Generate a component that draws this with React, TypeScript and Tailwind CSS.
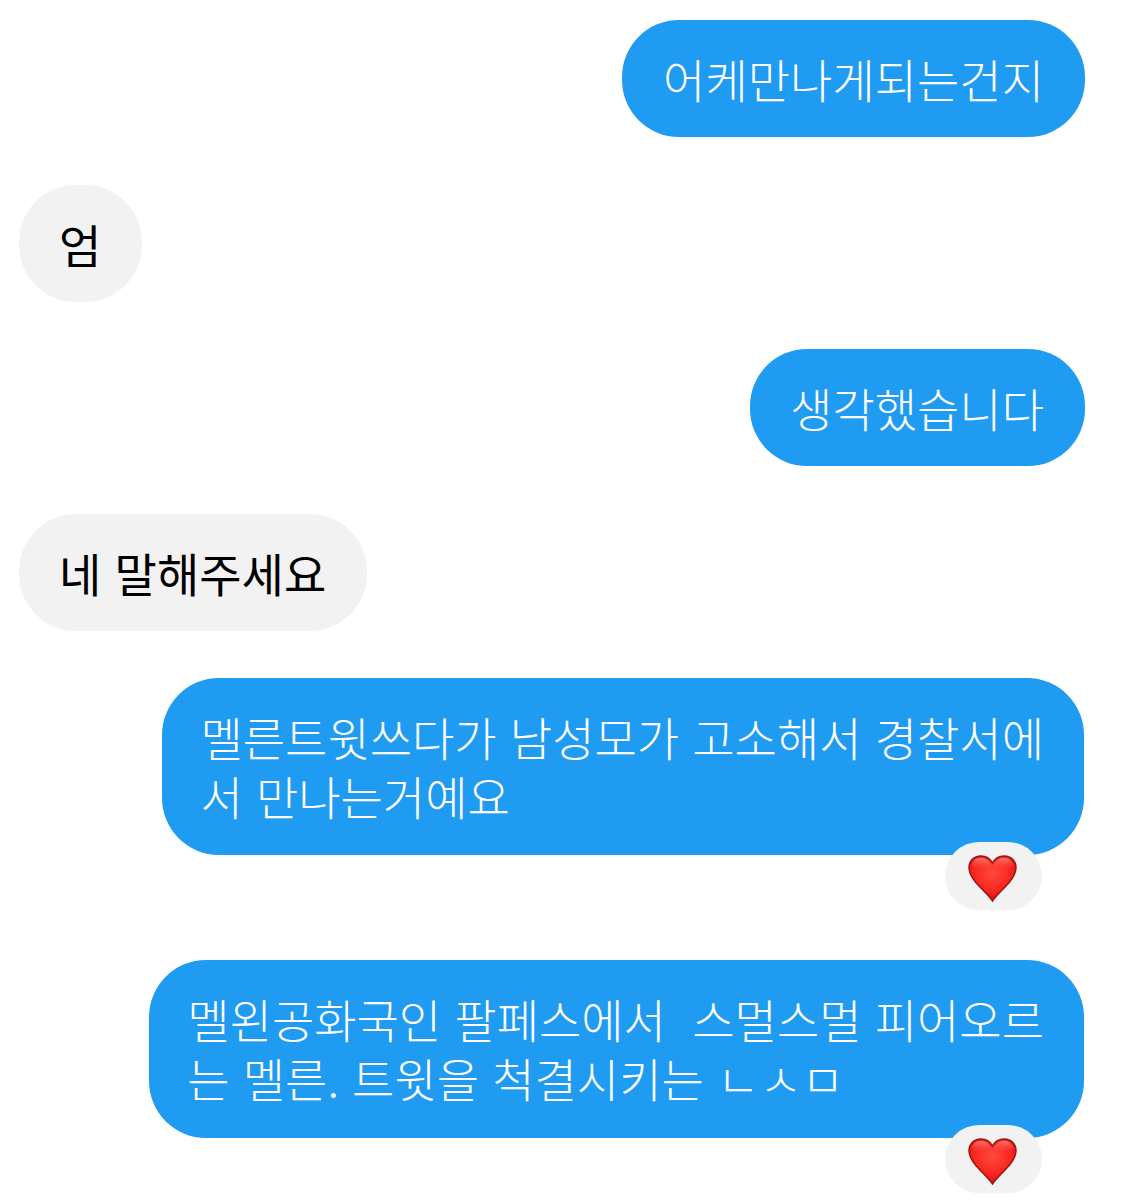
const fontStack = 'font-["Noto_Sans_CJK_KR","Noto_Sans",sans-serif]';

function Heart() {
  return (
    <svg viewBox="0 0 50 48" className="w-[49px] h-[47px] translate-y-[2px] -translate-x-[1px]">
      <defs>
        <radialGradient id="heartFill" cx="50%" cy="38%" r="68%">
          <stop offset="0%" stopColor="#ff4a3c" />
          <stop offset="60%" stopColor="#f8251e" />
          <stop offset="100%" stopColor="#c40d0a" />
        </radialGradient>
        <linearGradient id="heartShine" x1="0" y1="0" x2="0" y2="1">
          <stop offset="0%" stopColor="#ff9a90" stopOpacity="0.75" />
          <stop offset="100%" stopColor="#ff5a50" stopOpacity="0" />
        </linearGradient>
      </defs>
      <path
        d="M25 47C22 42 15 36 8 28C3 22 1 18 1 13C1 6 6 1 13 1C18 1 22.500 3.500 25 8C27.500 3.500 32 1 37 1C44 1 49 6 49 13C49 18 47 22 42 28C35 36 28 42 25 47Z"
        fill="url(#heartFill)"
        stroke="#9c1210"
        strokeWidth="1.500"
      />
      <path
        d="M25 12C22 6.500 18 3 13 3C8 3 4 6.500 3.500 12C10 14 18 15 25 12C32 15 40 14 46.500 12C46 6.500 42 3 37 3C32 3 28 6.500 25 12Z"
        fill="url(#heartShine)"
      />
    </svg>
  );
}

function Reaction() {
  return (
    <div className="absolute right-[42px] bottom-[-55px] w-[97px] h-[68px] rounded-[34px] bg-[#f2f2f2] flex items-center justify-center">
      <Heart />
    </div>
  );
}

function Sent({ lines, hearted, cls }: { lines: string[]; hearted?: boolean; cls: string }) {
  return (
    <div className={`relative self-end bg-[#1f9bf1] text-white rounded-[57px] pt-[29px] whitespace-pre ${cls}`}>
      {lines.map((line) => (
        <div key={line}>{line}</div>
      ))}
      {hearted && <Reaction />}
    </div>
  );
}

function Received({ text }: { text: string }) {
  return (
    <div className="self-start bg-[#f2f2f2] text-black font-normal rounded-[57px] pl-[40px] pr-[41px] pt-[29px] pb-[29px] mb-[47px] whitespace-pre">
      {text}
    </div>
  );
}

export default function App() {
  return (
    <div className={`w-[1131px] h-[1200px] overflow-hidden bg-white pt-[20px] pl-[19px] pr-[46px] flex flex-col text-[46px] leading-[59px] font-light [word-spacing:3px] ${fontStack}`}>
      <Sent lines={['어케만나게되는건지']} cls="pl-[41px] pr-[41px] pb-[29px] mb-[48px]" />
      <Received text="엄" />
      <Sent lines={['생각했습니다']} cls="pl-[40px] pr-[41px] pb-[29px] mb-[48px]" />
      <Received text="네 말해주세요" />
      <Sent lines={['멜른트윗쓰다가 남성모가 고소해서 경찰서에', '서 만나는거예요']} hearted cls="mr-[1px] pl-[38px] pr-[40px] pb-[30px] mb-[105px]" />
      <Sent lines={['멜왼공화국인 팔페스에서  스멀스멀 피어오르', '는 멜른. 트윗을 척결시키는 ㄴㅅㅁ']} hearted cls="mr-[1px] pl-[38px] pr-[40px] pb-[31px]" />
    </div>
  );
}
